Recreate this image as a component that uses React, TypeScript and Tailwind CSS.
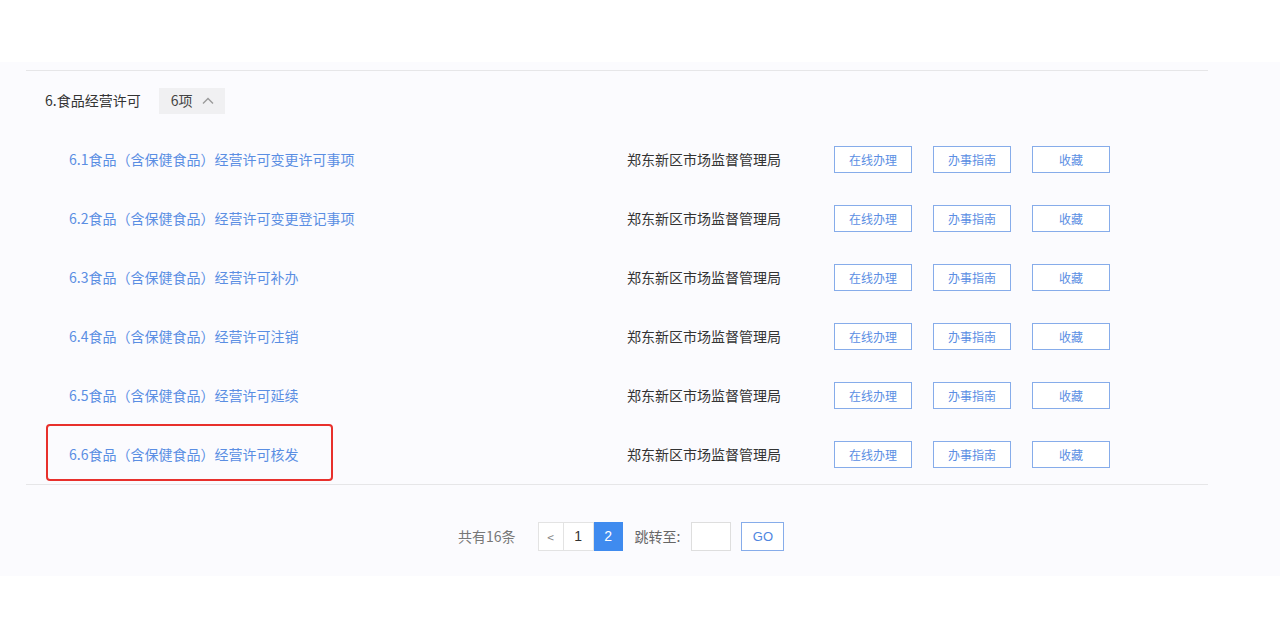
import React from "react";

const rows = [
  "6.1食品（含保健食品）经营许可变更许可事项",
  "6.2食品（含保健食品）经营许可变更登记事项",
  "6.3食品（含保健食品）经营许可补办",
  "6.4食品（含保健食品）经营许可注销",
  "6.5食品（含保健食品）经营许可延续",
  "6.6食品（含保健食品）经营许可核发",
];

const font = { fontFamily: '"Noto Sans CJK SC", "Noto Sans", sans-serif' };

function Btn({ label }: { label: string }) {
  return (
    <div className="w-[78px] h-[27px] border border-[#86acea] bg-white flex items-center justify-center text-[12px] text-[#5a8ee3]">
      {label}
    </div>
  );
}

export default function App() {
  return (
    <div className="w-[1280px] h-[640px] bg-white" style={font}>
      <div className="h-[62px] bg-white" />
      <div className="bg-[#fbfbfe] pt-[8px] pb-[25px]">
        <div className="ml-[26px] w-[1182px] border-t border-b border-[#e6e6e8]">
          <div className="h-[59px] flex items-center pl-[19px]">
            <span className="text-[14px] text-[#333]">6.食品经营许可</span>
            <div className="ml-[18px] w-[66px] h-[26px] bg-[#f0f0f2] flex items-center pl-[12px] text-[14px] text-[#444]">
              <span>6项</span>
              <svg width="14" height="10" viewBox="0 0 14 10" className="ml-[9px]">
                <polyline points="2,7.5 7,2.5 12,7.5" fill="none" stroke="#9a9a9a" strokeWidth="1.4" />
              </svg>
            </div>
          </div>
          {rows.map((r, i) => (
            <div key={r} className="relative h-[59px] flex items-center">
              <div className="w-[601px] pl-[43px] text-[14px] text-[#5a8ee3] whitespace-nowrap">{r}</div>
              <div className="w-[207px] text-[14px] text-[#333] whitespace-nowrap">郑东新区市场监督管理局</div>
              <div className="flex gap-[21px]">
                <Btn label="在线办理" />
                <Btn label="办事指南" />
                <Btn label="收藏" />
              </div>
              {i === 5 && (
                <div className="absolute left-[20px] top-[-1px] w-[287px] h-[57px] border-2 border-[#e8302c] rounded-[4px]" />
              )}
            </div>
          ))}
        </div>
        <div className="mt-[37px] flex items-center pl-[458px]">
          <span className="text-[14px] text-[#777] mr-[22px]">共有16条</span>
          <div className="flex h-[29px]">
            <div className="w-[26px] h-[29px] border border-[#e3e3e3] bg-white flex items-center justify-center text-[12px] text-[#888]">&lt;</div>
            <div className="w-[30px] h-[29px] border-y border-r border-[#e3e3e3] bg-white flex items-center justify-center text-[14px] text-[#333]" style={{ fontFamily: '"Liberation Sans", sans-serif' }}>1</div>
            <div className="w-[29px] h-[29px] bg-[#3f8bef] flex items-center justify-center text-[14px] text-white" style={{ fontFamily: '"Liberation Sans", sans-serif' }}>2</div>
          </div>
          <span className="ml-[12px] text-[14px] text-[#666]">跳转至:</span>
          <div className="ml-[11px] w-[40px] h-[29px] border border-[#dedede] bg-white" />
          <div className="ml-[10px] w-[43px] h-[29px] border border-[#86acea] bg-white flex items-center justify-center text-[13px] text-[#4f86df]" style={{ fontFamily: '"Liberation Sans", sans-serif' }}>GO</div>
        </div>
      </div>
    </div>
  );
}
